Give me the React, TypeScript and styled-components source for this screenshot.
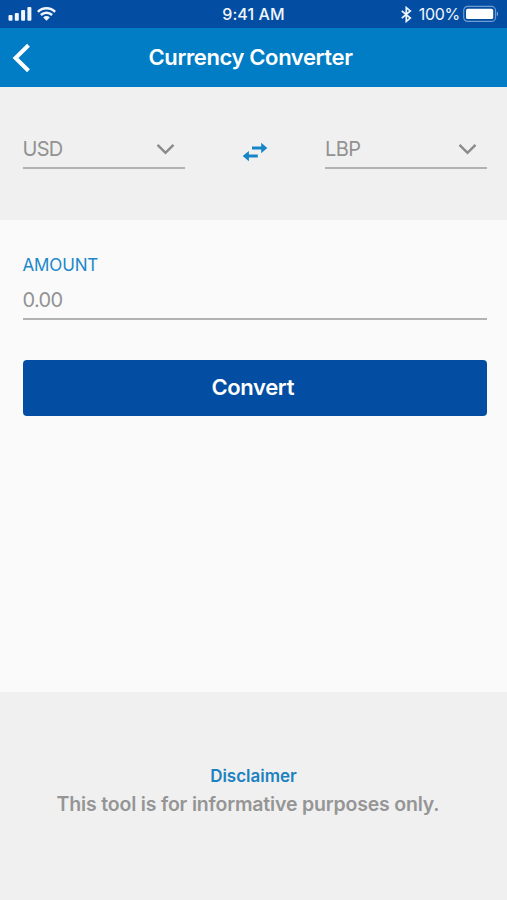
import React from "react";
import styled, { createGlobalStyle } from "styled-components";

const GlobalStyle = createGlobalStyle`
  *, *::before, *::after { box-sizing: border-box; }
  body { margin: 0; background: #fafafa; font-family: Inter, "Liberation Sans", sans-serif; }
`;

const Screen = styled.div`
  display: flex;
  flex-direction: column;
  width: 507px;
  height: 900px;
  background: #fafafa;
`;

const StatusBar = styled.header`
  display: grid;
  grid-template-columns: 1fr auto 1fr;
  align-items: center;
  height: 28px;
  padding: 0 8px 0 8px;
  background: #034ea2;
  color: #f1f6fc;
`;

const StatusGroup = styled.div<{ $end?: boolean }>`
  display: flex;
  align-items: center;
  justify-content: ${(p) => (p.$end ? "flex-end" : "flex-start")};
  gap: ${(p) => (p.$end ? 4 : 5)}px;
`;

const StatusText = styled.span<{ $spacing: number; $weight: number }>`
  font-size: 16px;
  line-height: 28px;
  font-weight: ${(p) => p.$weight};
  letter-spacing: ${(p) => p.$spacing}px;
  white-space: nowrap;
`;

const BatteryLevel = styled(StatusText)`
  margin: 0 -1px 0 3px;
`;

const TitleBar = styled.div`
  display: grid;
  grid-template-columns: 40px 1fr 40px;
  align-items: center;
  height: 59px;
  background: #007dc5;
  color: #fff;
`;

const BackButton = styled.button`
  display: flex;
  padding: 0 0 0 11px;
  border: 0;
  background: none;
  color: inherit;
`;

const Title = styled.h1`
  margin: 0;
  padding-right: 6px;
  text-align: center;
  font-size: 22px;
  line-height: 59px;
  font-weight: 600;
  letter-spacing: -0.38px;
`;

const CurrencyPanel = styled.section`
  display: grid;
  grid-template-columns: 162px 1fr 162px;
  height: 133px;
  padding: 42px 20px 0 22.5px;
  background: #f0f0f0;
`;

const CurrencySelect = styled.div`
  display: flex;
  align-items: center;
  justify-content: space-between;
  height: 40px;
  padding: 2.5px 10px 0 0;
  border-bottom: 2px solid #b2b2b2;
  color: #929292;
`;

const FieldText = styled.span<{ $spacing?: number }>`
  font-size: 20px;
  line-height: 40px;
  letter-spacing: ${(p) => p.$spacing ?? 0}px;
`;

const SwapButton = styled.button`
  display: flex;
  justify-content: center;
  align-items: flex-start;
  padding: 12px 0 0;
  border: 0;
  background: none;
  color: #1485c8;
`;

const Form = styled.main`
  flex: 1;
  padding: 34px 20px 0 22.5px;
`;

const AmountLabel = styled.label`
  display: block;
  height: 22px;
  font-size: 17px;
  line-height: 22px;
  letter-spacing: -0.15px;
  color: #1c88c9;
`;

const AmountField = styled.div`
  height: 43.5px;
  border-bottom: 2px solid #b2b2b2;
  color: #929292;
  padding-top: 4px;
`;

const ConvertButton = styled.button`
  display: block;
  width: 100%;
  height: 56.5px;
  margin-top: 40px;
  padding: 0 4px 2px 0;
  border: 0;
  border-radius: 4px;
  background: #034ea2;
  color: #fff;
  font: 600 22px/54px Inter, "Liberation Sans", sans-serif;
  letter-spacing: -0.35px;
`;

const Disclaimer = styled.footer`
  height: 208px;
  padding-top: 71px;
  background: #f0f0f0;
  text-align: center;
`;

const DisclaimerTitle = styled.h2`
  margin: 0;
  font-size: 17px;
  line-height: 26px;
  font-weight: 600;
  letter-spacing: 0;
  color: #1c82c0;
`;

const DisclaimerText = styled.p`
  margin: 1px 11px 0 0;
  font-size: 19.5px;
  line-height: 28px;
  font-weight: 600;
  letter-spacing: -0.18px;
  color: #959595;
`;

const SignalIcon = () => (
  <svg width="24" height="16" viewBox="0 0 24 16" fill="currentColor">
    <rect x="0.5" y="9" width="4" height="5.7" rx="1" />
    <rect x="6.8" y="7" width="4" height="7.7" rx="1" />
    <rect x="13.1" y="4" width="4" height="10.7" rx="1" />
    <rect x="19.4" y="1" width="4" height="13.7" rx="1" />
  </svg>
);

const WifiIcon = () => (
  <svg width="19" height="16" viewBox="0 0 19 16" fill="none" stroke="currentColor" strokeWidth="2.5">
    <path d="M.9 5.8a12.2 12.2 0 0 1 17.2 0M3.9 9a8 8 0 0 1 11.2 0" />
    <path d="M6.2 11.4a4.7 4.7 0 0 1 6.6 0L9.5 14.7z" fill="currentColor" stroke="none" />
  </svg>
);

const BluetoothIcon = () => (
  <svg width="11" height="17" viewBox="0 0 11 17" fill="none" stroke="currentColor" strokeWidth="1.7">
    <path d="M.8 4.8 9.3 12.1 5.3 15.4V1.6l4 3.3L.8 12.2" />
  </svg>
);

const BatteryIcon = () => (
  <svg width="36" height="18" viewBox="0 0 36 18">
    <rect x="0.7" y="1.4" width="31.8" height="15" rx="4" fill="none" stroke="#6f9bd0" strokeWidth="1.2" />
    <rect x="3" y="3.7" width="27.2" height="10.4" rx="1.7" fill="#fff" />
    <path d="M33.8 6.5q2.6 2.4 0 4.8z" fill="#8eb2dc" />
  </svg>
);

const BackIcon = () => (
  <svg width="20" height="30" viewBox="0 0 20 30" fill="none" stroke="currentColor" strokeWidth="4">
    <path d="M17.5 2.2 4.5 15l13 12.8" />
  </svg>
);

const ChevronDown = () => (
  <svg width="19" height="12" viewBox="0 0 19 12" fill="none" stroke="#8b8b8b" strokeWidth="2.4">
    <path d="m1.5 1.8 8 8 8-8" />
  </svg>
);

const SwapIcon = () => (
  <svg width="26" height="22" viewBox="0 0 26 22" fill="currentColor">
    <path d="M10 5.5h9.2V1.7L25.3 7l-6.1 5.2V8.4H10zM15.8 13.6H6.9V9.9L.7 15.1l6.2 5.2v-3.8h8.9z" />
  </svg>
);

const CurrencyField = ({ code, spacing }: { code: string; spacing: number }) => (
  <CurrencySelect>
    <FieldText $spacing={spacing}>{code}</FieldText>
    <ChevronDown />
  </CurrencySelect>
);

export default function App() {
  return (
    <>
      <GlobalStyle />
      <Screen>
        <StatusBar>
          <StatusGroup>
            <SignalIcon />
            <WifiIcon />
          </StatusGroup>
          <StatusText $spacing={0.1} $weight={500}>9:41 AM</StatusText>
          <StatusGroup $end>
            <BluetoothIcon />
            <BatteryLevel $spacing={-0.3} $weight={400}>100%</BatteryLevel>
            <BatteryIcon />
          </StatusGroup>
        </StatusBar>
        <TitleBar>
          <BackButton aria-label="Back"><BackIcon /></BackButton>
          <Title>Currency Converter</Title>
        </TitleBar>
        <CurrencyPanel>
          <CurrencyField code="USD" spacing={-0.7} />
          <SwapButton aria-label="Swap currencies"><SwapIcon /></SwapButton>
          <CurrencyField code="LBP" spacing={-0.6} />
        </CurrencyPanel>
        <Form>
          <AmountLabel>AMOUNT</AmountLabel>
          <AmountField><FieldText $spacing={-0.7}>0.00</FieldText></AmountField>
          <ConvertButton>Convert</ConvertButton>
        </Form>
        <Disclaimer>
          <DisclaimerTitle>Disclaimer</DisclaimerTitle>
          <DisclaimerText>This tool is for informative purposes only.</DisclaimerText>
        </Disclaimer>
      </Screen>
    </>
  );
}
